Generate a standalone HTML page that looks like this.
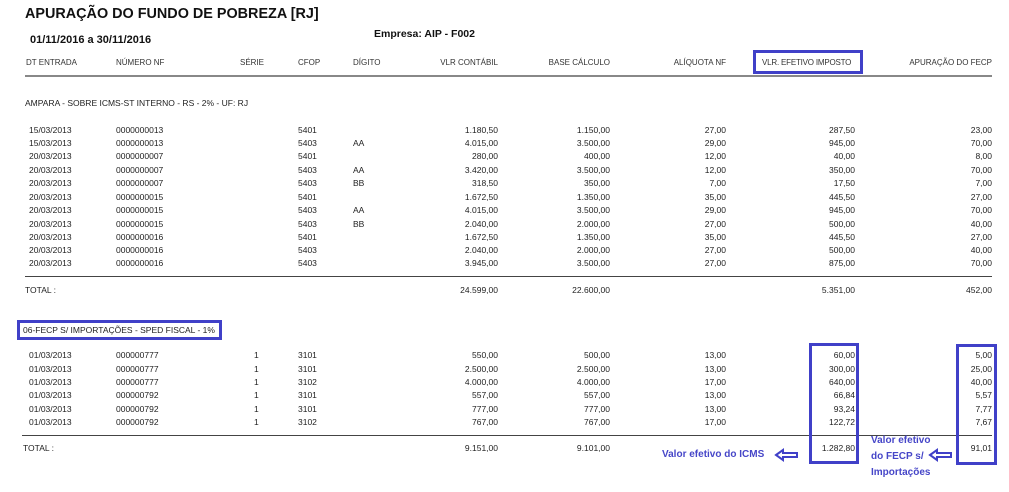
<!DOCTYPE html>
<html><head><meta charset="utf-8"><style>
body{margin:0;width:1009px;height:492px;background:#fff;position:relative;overflow:hidden;font-family:"Liberation Sans",sans-serif;color:#222}
div{position:absolute;white-space:nowrap}
.r{font-size:8.5px;height:12px;line-height:12px;left:0;width:1009px}
.r span{position:absolute}
.c1{left:29px}.c2{left:116px}.c3{left:254px}.c4{left:298px}.c5{left:353px}
.v1{right:511px}.v2{right:399px}.v3{right:283px}.v4{right:154px}.v5{right:17px}
.h{font-size:8px}
.h span{color:#333}
.box{border:3px solid #4040c8;box-sizing:border-box}
.lbl{color:#4646c8;font-weight:bold;font-size:10px;line-height:16px}
</style></head><body>
<div style="left:25px;top:6px;font-size:14.4px;font-weight:bold;color:#111">APURAÇÃO DO FUNDO DE POBREZA [RJ]</div>
<div style="left:30px;top:34px;font-size:11px;font-weight:bold;color:#111">01/11/2016 a 30/11/2016</div>
<div style="left:374px;top:28px;font-size:10.5px;font-weight:bold;color:#111">Empresa: AIP - F002</div>
<div class="r h" style="top:57px"><span style="left:26px">DT ENTRADA</span><span class="c2">NÚMERO NF</span><span style="left:240px">SÉRIE</span><span class="c4">CFOP</span><span class="c5">DÍGITO</span><span class="v1">VLR CONTÁBIL</span><span class="v2">BASE CÁLCULO</span><span class="v3">ALÍQUOTA NF</span><span style="left:762px;letter-spacing:-0.2px">VLR. EFETIVO IMPOSTO</span><span class="v5">APURAÇÃO DO FECP</span></div>
<div class="box" style="left:753px;top:50px;width:110px;height:24px"></div>
<div style="left:25px;top:75px;width:967px;height:2px;background:#888"></div>
<div class="r" style="top:97px"><span style="left:25px">AMPARA - SOBRE ICMS-ST INTERNO - RS - 2% - UF: RJ</span></div>

<div class="r" style="top:124px"><span class="c1">15/03/2013</span><span class="c2">0000000013</span><span class="c4">5401</span><span class="v1">1.180,50</span><span class="v2">1.150,00</span><span class="v3">27,00</span><span class="v4">287,50</span><span class="v5">23,00</span></div>
<div class="r" style="top:137px"><span class="c1">15/03/2013</span><span class="c2">0000000013</span><span class="c4">5403</span><span class="c5">AA</span><span class="v1">4.015,00</span><span class="v2">3.500,00</span><span class="v3">29,00</span><span class="v4">945,00</span><span class="v5">70,00</span></div>
<div class="r" style="top:150px"><span class="c1">20/03/2013</span><span class="c2">0000000007</span><span class="c4">5401</span><span class="v1">280,00</span><span class="v2">400,00</span><span class="v3">12,00</span><span class="v4">40,00</span><span class="v5">8,00</span></div>
<div class="r" style="top:164px"><span class="c1">20/03/2013</span><span class="c2">0000000007</span><span class="c4">5403</span><span class="c5">AA</span><span class="v1">3.420,00</span><span class="v2">3.500,00</span><span class="v3">12,00</span><span class="v4">350,00</span><span class="v5">70,00</span></div>
<div class="r" style="top:177px"><span class="c1">20/03/2013</span><span class="c2">0000000007</span><span class="c4">5403</span><span class="c5">BB</span><span class="v1">318,50</span><span class="v2">350,00</span><span class="v3">7,00</span><span class="v4">17,50</span><span class="v5">7,00</span></div>
<div class="r" style="top:191px"><span class="c1">20/03/2013</span><span class="c2">0000000015</span><span class="c4">5401</span><span class="v1">1.672,50</span><span class="v2">1.350,00</span><span class="v3">35,00</span><span class="v4">445,50</span><span class="v5">27,00</span></div>
<div class="r" style="top:204px"><span class="c1">20/03/2013</span><span class="c2">0000000015</span><span class="c4">5403</span><span class="c5">AA</span><span class="v1">4.015,00</span><span class="v2">3.500,00</span><span class="v3">29,00</span><span class="v4">945,00</span><span class="v5">70,00</span></div>
<div class="r" style="top:218px"><span class="c1">20/03/2013</span><span class="c2">0000000015</span><span class="c4">5403</span><span class="c5">BB</span><span class="v1">2.040,00</span><span class="v2">2.000,00</span><span class="v3">27,00</span><span class="v4">500,00</span><span class="v5">40,00</span></div>
<div class="r" style="top:231px"><span class="c1">20/03/2013</span><span class="c2">0000000016</span><span class="c4">5401</span><span class="v1">1.672,50</span><span class="v2">1.350,00</span><span class="v3">35,00</span><span class="v4">445,50</span><span class="v5">27,00</span></div>
<div class="r" style="top:244px"><span class="c1">20/03/2013</span><span class="c2">0000000016</span><span class="c4">5403</span><span class="v1">2.040,00</span><span class="v2">2.000,00</span><span class="v3">27,00</span><span class="v4">500,00</span><span class="v5">40,00</span></div>
<div class="r" style="top:257px"><span class="c1">20/03/2013</span><span class="c2">0000000016</span><span class="c4">5403</span><span class="v1">3.945,00</span><span class="v2">3.500,00</span><span class="v3">27,00</span><span class="v4">875,00</span><span class="v5">70,00</span></div>
<div style="left:25px;top:276px;width:967px;height:1px;background:#444"></div>
<div class="r" style="top:284px"><span style="left:25px">TOTAL :</span><span class="v1">24.599,00</span><span class="v2">22.600,00</span><span class="v4">5.351,00</span><span class="v5">452,00</span></div>

<div class="box" style="left:17px;top:320px;width:205px;height:20px"></div>
<div class="r" style="top:324px"><span style="left:23px">06-FECP S/ IMPORTAÇÕES - SPED FISCAL - 1%</span></div>

<div class="r" style="top:349px"><span class="c1">01/03/2013</span><span class="c2">000000777</span><span class="c3">1</span><span class="c4">3101</span><span class="v1">550,00</span><span class="v2">500,00</span><span class="v3">13,00</span><span class="v4">60,00</span><span class="v5">5,00</span></div>
<div class="r" style="top:363px"><span class="c1">01/03/2013</span><span class="c2">000000777</span><span class="c3">1</span><span class="c4">3101</span><span class="v1">2.500,00</span><span class="v2">2.500,00</span><span class="v3">13,00</span><span class="v4">300,00</span><span class="v5">25,00</span></div>
<div class="r" style="top:376px"><span class="c1">01/03/2013</span><span class="c2">000000777</span><span class="c3">1</span><span class="c4">3102</span><span class="v1">4.000,00</span><span class="v2">4.000,00</span><span class="v3">17,00</span><span class="v4">640,00</span><span class="v5">40,00</span></div>
<div class="r" style="top:389px"><span class="c1">01/03/2013</span><span class="c2">000000792</span><span class="c3">1</span><span class="c4">3101</span><span class="v1">557,00</span><span class="v2">557,00</span><span class="v3">13,00</span><span class="v4">66,84</span><span class="v5">5,57</span></div>
<div class="r" style="top:403px"><span class="c1">01/03/2013</span><span class="c2">000000792</span><span class="c3">1</span><span class="c4">3101</span><span class="v1">777,00</span><span class="v2">777,00</span><span class="v3">13,00</span><span class="v4">93,24</span><span class="v5">7,77</span></div>
<div class="r" style="top:416px"><span class="c1">01/03/2013</span><span class="c2">000000792</span><span class="c3">1</span><span class="c4">3102</span><span class="v1">767,00</span><span class="v2">767,00</span><span class="v3">17,00</span><span class="v4">122,72</span><span class="v5">7,67</span></div>
<div style="left:22px;top:435px;width:970px;height:1px;background:#444"></div>
<div class="r" style="top:442px"><span style="left:23px">TOTAL :</span><span class="v1">9.151,00</span><span class="v2">9.101,00</span><span class="v4">1.282,80</span><span class="v5">91,01</span></div>

<div class="box" style="left:809px;top:343px;width:50px;height:121px"></div>
<div class="box" style="left:956px;top:344px;width:41px;height:121px"></div>

<div class="lbl" style="left:662px;top:447px">Valor efetivo do ICMS</div>
<svg style="position:absolute;left:774px;top:448px" width="26" height="14"><path d="M2 7 L9 2 L9 5 L23 5 L23 9 L9 9 L9 12 Z" fill="none" stroke="#4040c8" stroke-width="2"/></svg>
<div class="lbl" style="left:871px;top:433px">Valor efetivo<br>do FECP s/<br>Importações</div>
<svg style="position:absolute;left:928px;top:448px" width="26" height="14"><path d="M2 7 L9 2 L9 5 L23 5 L23 9 L9 9 L9 12 Z" fill="none" stroke="#4040c8" stroke-width="2"/></svg>
</body></html>
